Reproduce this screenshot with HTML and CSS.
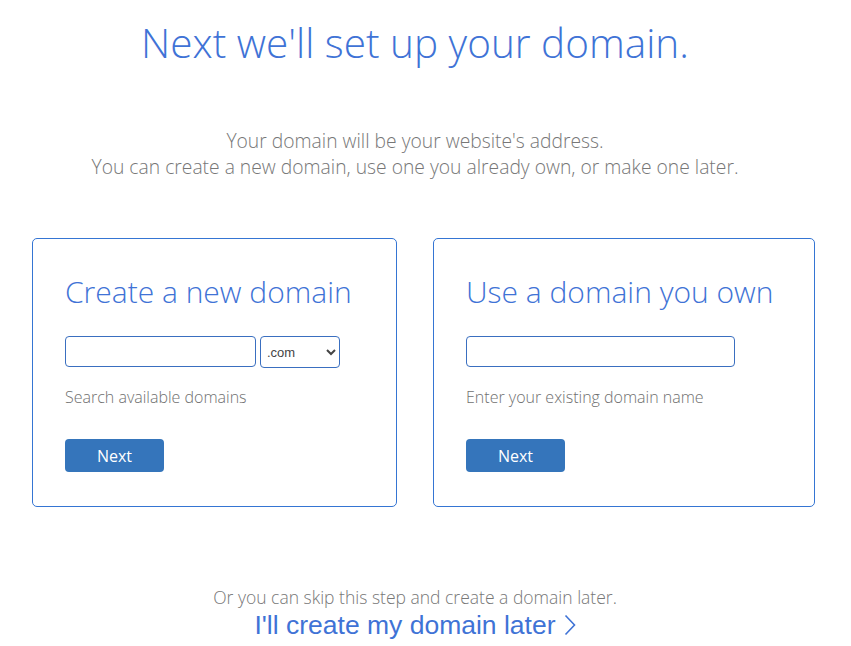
FILE: index.html
```html
<!DOCTYPE html>
<html>
<head>
<meta charset="utf-8">
<link rel="stylesheet" href="styles.css">
</head>
<body>
<main class="page">
  <h1 class="title">Next we'll set up your domain.</h1>
  <p class="intro">Your domain will be your website's address.<br>You can create a new domain, use one you already own, or make one later.</p>
  <div class="cards">
    <section class="card card-new">
      <h2 class="card-title">Create a new domain</h2>
      <div class="field-row">
        <input class="text-input input-new" type="text">
        <select class="tld-select"><option>.com</option></select>
      </div>
      <p class="hint">Search available domains</p>
      <button class="btn">Next</button>
    </section>
    <section class="card card-own">
      <h2 class="card-title">Use a domain you own</h2>
      <div class="field-row">
        <input class="text-input input-own" type="text">
      </div>
      <p class="hint">Enter your existing domain name</p>
      <button class="btn">Next</button>
    </section>
  </div>
  <div class="later">
    <p class="later-note">Or you can skip this step and create a domain later.</p>
    <a class="later-link" href="#">I'll create my domain later <svg class="chev" width="12" height="22" viewBox="0 0 12 22"><path d="M1.5 1.5 L10.5 11 L1.5 20.5" fill="none" stroke="#3f73d6" stroke-width="1.6"/></svg></a>
  </div>
</main>
</body>
</html>
```

FILE: styles.css
```css
html, body {
  margin: 0;
  padding: 0;
  background: #fff;
}
body {
  font-family: "Open Sans", sans-serif;
  font-weight: 300;
}
.page {
  width: 830px;
  display: flex;
  flex-direction: column;
  align-items: center;
}
.title {
  margin: 16px 0 0;
  font-size: 40.5px;
  line-height: 54px;
  font-weight: 300;
  color: #3f73d6;
}
.intro {
  margin: 58px 0 0;
  font-size: 19.3px;
  line-height: 26px;
  color: #777;
  text-align: center;
}
.cards {
  align-self: stretch;
  display: flex;
  gap: 36px;
  margin: 58px 0 0 32px;
}
.card {
  box-sizing: border-box;
  height: 269px;
  border: 1px solid #3575d3;
  border-radius: 5px;
  padding: 32px 32px 0 32px;
}
.card-new { width: 365px; }
.card-own { width: 382px; }
.card-title {
  margin: 0;
  font-size: 30px;
  line-height: 42px;
  font-weight: 300;
  color: #3f73d6;
}
.field-row {
  display: flex;
  gap: 4px;
  margin-top: 23px;
  height: 32px;
}
.text-input {
  box-sizing: border-box;
  height: 31px;
  border: 1px solid #3a6fc0;
  border-radius: 4px;
  padding: 0 6px;
  font-size: 14px;
  background: #fff;
}
.input-new { width: 191px; }
.input-own { width: 269px; }
.tld-select {
  box-sizing: border-box;
  width: 80px;
  height: 32px;
  border: 1px solid #3a6fc0;
  border-radius: 4px;
  font-family: "Liberation Sans", Arial, sans-serif;
  font-size: 13px;
  color: #444;
  background: #fff;
  padding: 0 2px;
}
.hint {
  margin: 16px 0 0;
  font-size: 16px;
  line-height: 26px;
  color: #707070;
}
.btn {
  display: block;
  margin-top: 29px;
  width: 99px;
  height: 33px;
  border: none;
  border-radius: 4px;
  background: #3575bb;
  color: #fff;
  font-family: "Open Sans", sans-serif;
  font-weight: 400;
  font-size: 16px;
}
.later {
  margin-top: 78px;
  text-align: center;
}
.later-note {
  margin: 0;
  font-size: 17.5px;
  line-height: 24px;
  color: #777;
}
.later-link {
  display: inline-flex;
  align-items: center;
  gap: 8px;
  font-family: "Liberation Sans", Arial, sans-serif;
  font-size: 26.5px;
  line-height: 32px;
  color: #3f73d6;
  text-decoration: none;
}
```
